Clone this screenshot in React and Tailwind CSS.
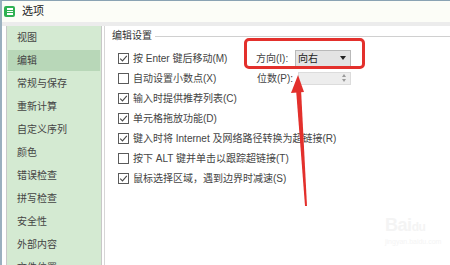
import React from 'react';

const navItems = ['视图', '编辑', '常规与保存', '重新计算', '自定义序列', '颜色', '错误检查', '拼写检查', '安全性', '外部内容', '文件位置'];

function CheckBox({ checked }) {
  return (
    <span className="w-[11px] h-[11px] border border-[#5a5a5a] bg-white flex items-center justify-center shrink-0">
      {checked && (
        <svg width="9" height="9" viewBox="0 0 9 9">
          <path d="M1.2 4.6 L3.5 6.9 L7.8 1.8" fill="none" stroke="#4a4a4a" strokeWidth="1.1" />
        </svg>
      )}
    </span>
  );
}

function Option({ checked, label }) {
  return (
    <div className="flex items-center gap-[4px]">
      <CheckBox checked={checked} />
      <span className="whitespace-nowrap">{label}</span>
    </div>
  );
}

export default function App() {
  return (
    <div className="relative w-[450px] h-[265px] overflow-hidden bg-white border-t border-t-[#8aa3b3] border-l-2 border-l-[#9ab0bf] font-['Liberation_Sans','Noto_Sans_CJK_SC',sans-serif] text-[10px] text-[#444]">
      {/* title bar */}
      <div className="h-[21px] bg-[#fcfdf7] flex items-center pl-[2px]">
        <div className="w-[11px] h-[11px] rounded-[2px] bg-[#2fb152] flex flex-col items-center justify-center gap-[1px]">
          <span className="w-[6px] h-[1.5px] bg-white" />
          <span className="w-[6px] h-[1.5px] bg-white" />
          <span className="w-[6px] h-[1.5px] bg-white" />
        </div>
        <span className="ml-[7px] text-[11px] text-[#222]">选项</span>
      </div>
      <div className="h-[4px] bg-[#ececec]" />

      <div className="flex h-[240px]">
        {/* nav */}
        <div className="ml-[4px] w-[96px] border-l border-r border-[#c8c8c8] bg-[#d4ead2] flex flex-col">
          {navItems.map((n, i) => (
            <div key={n} className="h-[23px] shrink-0 flex items-center px-[1px]">
              <div className={`w-full h-[21px] flex items-center pl-[9px] ${i === 1 ? 'bg-[#b8d7b8]' : ''}`}>
                {n}
              </div>
            </div>
          ))}
        </div>

        {/* content */}
        <div className="ml-[2px] flex-1 border-l border-[#d6d6d6] flex flex-col">
          <div className="h-[18px] flex items-center pl-[7px]">
            <span className="text-[#333]">编辑设置</span>
            <div className="flex-1 h-px bg-[#d0d0d0] ml-[3px] mt-[2px]" />
          </div>
          <div className="mt-[4px] pl-[13px] flex flex-col">
            <div className="h-[20px] flex items-center">
              <div className="w-[138px]">
                <Option checked label="按 Enter 键后移动(M)" />
              </div>
              <span className="w-[39px] whitespace-nowrap">方向(I):</span>
              <div className="w-[56px] h-[17px] bg-[#e3e3e3] border border-[#b9b9b9] flex items-center pl-[2px] pr-[4px] justify-between text-[#222]">
                <span>向右</span>
                <svg width="6" height="4" viewBox="0 0 6 4"><path d="M0 0 H6 L3 4 Z" fill="#222" /></svg>
              </div>
            </div>
            <div className="h-[20px] flex items-center">
              <div className="w-[139px]">
                <Option label="自动设置小数点(X)" />
              </div>
              <span className="w-[41px] whitespace-nowrap">位数(P):</span>
              <div className="w-[53px] h-[13px] bg-[#ededed] border border-[#dcdcdc] flex items-center justify-end pr-[4px]">
                <div className="flex flex-col gap-[2px]">
                  <svg width="4" height="3" viewBox="0 0 4 3"><path d="M0 3 H4 L2 0 Z" fill="#9a9a9a" /></svg>
                  <svg width="4" height="3" viewBox="0 0 4 3"><path d="M0 0 H4 L2 3 Z" fill="#9a9a9a" /></svg>
                </div>
              </div>
            </div>
            <div className="h-[20px] flex items-center"><Option checked label="输入时提供推荐列表(C)" /></div>
            <div className="h-[20px] flex items-center"><Option checked label="单元格拖放功能(D)" /></div>
            <div className="h-[20px] flex items-center"><Option checked label="键入时将 Internet 及网络路径转换为超链接(R)" /></div>
            <div className="h-[20px] flex items-center"><Option label="按下 ALT 键并单击以跟踪超链接(T)" /></div>
            <div className="h-[20px] flex items-center"><Option checked label="鼠标选择区域，遇到边界时减速(S)" /></div>
          </div>
        </div>
      </div>

      {/* annotation: red highlight box */}
      <div className="absolute left-[242px] top-[37px] w-[121px] h-[31px] border-[3px] border-[#e3302c] rounded-[5px]" />

      {/* annotation: red arrow */}
      <svg className="absolute left-0 top-0" width="450" height="265" viewBox="0 0 450 265">
        <path d="M296 74 L289 92 L302 91 Z" fill="#e3302c" />
        <path d="M294 88 L299 88 L305 205 L303 205 Z" fill="#e3302c" />
      </svg>

      {/* faint watermark */}
      <div className="absolute left-[383px] top-[215px] flex flex-col items-start text-[#f4f4f4]">
        <span className="text-[18px] font-bold leading-none tracking-tight">Bai<span className="text-[12px]">du</span></span>
        <span className="text-[7px] leading-none mt-[4px]">jingyan.baidu.com</span>
      </div>
    </div>
  );
}
